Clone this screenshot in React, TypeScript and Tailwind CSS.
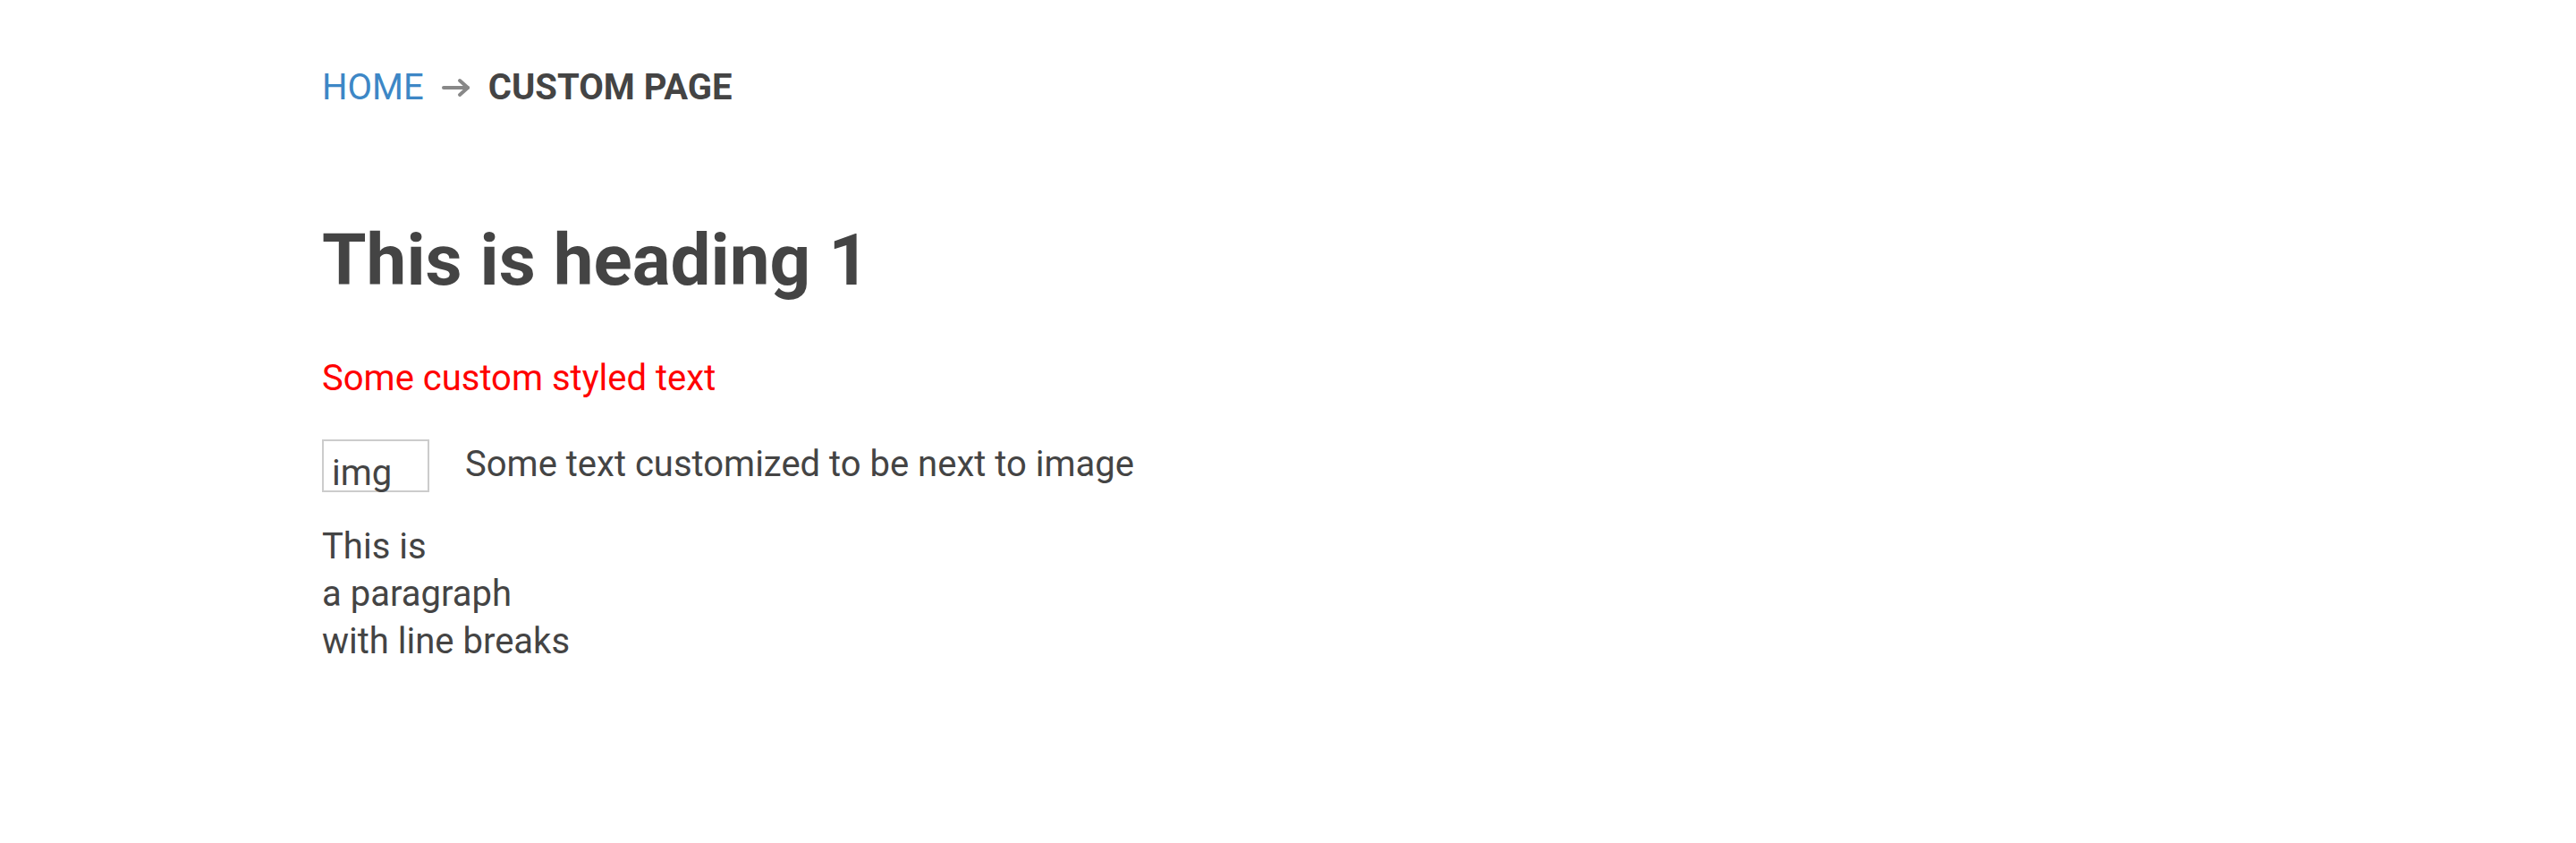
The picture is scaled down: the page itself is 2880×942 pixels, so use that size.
import React from "react";

export default function App() {
  return (
    <div className="min-h-screen bg-white text-[#444444]" style={{ fontFamily: "Roboto, 'Noto Sans', sans-serif" }}>
      <div className="pl-[360px]">
        <div className="pt-[68px] flex items-center text-[40px] leading-[60px]">
          <span className="text-[#3d87c6]">HOME</span>
          <svg className="mx-[20px]" width="32" height="22" viewBox="0 0 32 22">
            <path d="M2 11 H29" stroke="#888888" strokeWidth="4" strokeLinecap="round" fill="none" />
            <path d="M20 3 L29 11 L20 19" stroke="#888888" strokeWidth="4" strokeLinecap="round" strokeLinejoin="round" fill="none" />
          </svg>
          <span className="font-bold">CUSTOM PAGE</span>
        </div>
        <h1 className="mt-[115px] text-[80px] leading-[96px] font-bold">This is heading 1</h1>
        <p className="mt-[54px] text-[40px] leading-[60px] text-[#ff0000]">Some custom styled text</p>
        <div className="mt-[38px] flex items-start text-[40px]">
          <div className="w-[120px] h-[59px] border-2 border-[#cccccc] pl-[9px] shrink-0">
            <span className="block leading-[60px] mt-[6px]">img</span>
          </div>
          <span className="ml-[40px] leading-[55px]">Some text customized to be next to image</span>
        </div>
        <p className="mt-[35px] text-[40px] leading-[52.8px]">
          This is
          <br />
          a paragraph
          <br />
          with line breaks
        </p>
      </div>
    </div>
  );
}
